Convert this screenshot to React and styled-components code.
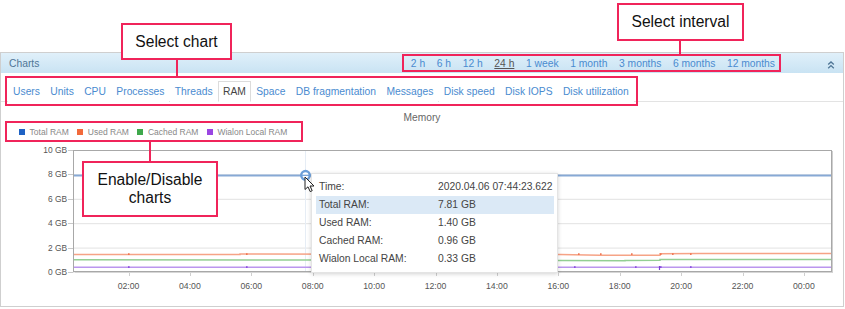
import React from 'react';
import styled, { createGlobalStyle } from 'styled-components';

const Global = createGlobalStyle`
  html, body { margin: 0; padding: 0; background: #fff; }
  body { font-family: "Liberation Sans", Arial, sans-serif; }
`;

const RED = '#f0245a';
const LINK = '#4a8bd0';

const Page = styled.div`
  position: relative;
  width: 845px;
  height: 309px;
  padding-top: 52px;
  box-sizing: border-box;
  overflow: hidden;
  font-family: "Liberation Sans", Arial, sans-serif;
  background: #fff;
`;

const Panel = styled.section`
  width: 844px;
  height: 255px;
  box-sizing: border-box;
  border: 1px solid #cfcfcf;
  display: flex;
  flex-direction: column;
`;

const Header = styled.header`
  height: 20px;
  display: flex;
  align-items: center;
  padding: 0 8px;
  background: linear-gradient(to bottom, #e0f0fa, #c9e3f3);
`;

const Title = styled.div`
  font-size: 10.3px;
  color: #4f7696;
`;

const Intervals = styled.nav`
  margin-left: auto;
  display: flex;
  gap: 11.6px;
  font-size: 10.3px;
`;

const Interval = styled.span`
  color: ${p => (p.$active ? '#555' : LINK)};
  text-decoration: ${p => (p.$active ? 'underline' : 'none')};
  white-space: nowrap;
`;

const Collapse = styled.div`
  margin-left: 52px;
  width: 8px;
  height: 8px;
  margin-top: 3px;
  display: flex;
`;

const Tabs = styled.div`
  height: 28px;
  display: flex;
  align-items: flex-end;
  gap: 0.3px;
  padding-left: 7px;
  border-bottom: 1px solid #e3e3e3;
`;

const Tab = styled.div`
  box-sizing: border-box;
  height: 21px;
  margin-bottom: -1px;
  padding: 0 4.05px;
  line-height: 19px;
  font-size: 10.3px;
  white-space: nowrap;
  color: ${p => (p.$active ? '#444' : LINK)};
  border: 1px solid ${p => (p.$active ? '#dcdcdc' : 'transparent')};
  border-bottom-color: ${p => (p.$active ? '#fff' : 'transparent')};
  background: #fff;
`;

const Body = styled.div`
  display: flex;
  flex-direction: column;
`;

const ChartTitle = styled.div`
  margin-top: 8px;
  height: 14px;
  line-height: 15px;
  text-align: center;
  font-size: 10.2px;
  color: #666;
`;

const Legend = styled.div`
  height: 15px;
  display: flex;
  align-items: center;
  gap: 8.4px;
  padding-left: 18px;
`;

const LegendItem = styled.div`
  display: flex;
  align-items: center;
  gap: 4.6px;
  font-size: 8.5px;
  color: #888;
`;

const Swatch = styled.span`
  width: 6px;
  height: 6px;
  background: ${p => p.$color};
`;

const ChartSvg = styled.svg`
  display: block;
  width: 842px;
  height: 158px;
  font-family: "Liberation Sans", Arial, sans-serif;
`;

const Tooltip = styled.div`
  position: absolute;
  left: 311px;
  top: 173px;
  width: 247px;
  box-sizing: border-box;
  padding: 4px 3px 4px 4px;
  background: #fff;
  border: 1px solid #e4e4e4;
  box-shadow: 0 1px 4px rgba(0, 0, 0, 0.18);
  font-size: 10.3px;
  color: #444;
`;

const TipRow = styled.div`
  display: grid;
  grid-template-columns: 119px 1fr;
  height: 18px;
  line-height: 18px;
  padding-left: 3px;
  background: ${p => (p.$hl ? '#dbe9f6' : 'transparent')};
`;

const Cursor = styled.svg`
  position: absolute;
  left: 304px;
  top: 176px;
  width: 11px;
  height: 17px;
`;

const Callout = styled.div`
  position: absolute;
  left: ${p => p.$x}px;
  top: ${p => p.$y}px;
  width: ${p => p.$w}px;
  height: ${p => p.$h}px;
  box-sizing: border-box;
  border: 2px solid ${RED};
  background: #fff;
  display: flex;
  align-items: center;
  justify-content: center;
  text-align: center;
  font-size: 15.6px;
  line-height: 18px;
  color: #111;
`;

const Frame = styled.div`
  position: absolute;
  left: ${p => p.$x}px;
  top: ${p => p.$y}px;
  width: ${p => p.$w}px;
  height: ${p => p.$h}px;
  box-sizing: border-box;
  border: 2px solid ${RED};
  pointer-events: none;
`;

const Connector = styled.div`
  position: absolute;
  left: ${p => p.$x}px;
  top: ${p => p.$y}px;
  width: 2px;
  height: ${p => p.$h}px;
  background: ${RED};
`;

const intervals = ['2 h', '6 h', '12 h', '24 h', '1 week', '1 month', '3 months', '6 months', '12 months'];
const tabs = ['Users', 'Units', 'CPU', 'Processes', 'Threads', 'RAM', 'Space', 'DB fragmentation', 'Messages', 'Disk speed', 'Disk IOPS', 'Disk utilization'];
const legend = [
  { label: 'Total RAM', color: '#1e62c4' },
  { label: 'Used RAM', color: '#f26a3b' },
  { label: 'Cached RAM', color: '#3fa84b' },
  { label: 'Wialon Local RAM', color: '#9a46e2' },
];
const tip = [
  ['Time:', '2020.04.06 07:44:23.622'],
  ['Total RAM:', '7.81 GB', true],
  ['Used RAM:', '1.40 GB'],
  ['Cached RAM:', '0.96 GB'],
  ['Wialon Local RAM:', '0.33 GB'],
];

const yv = v => 271 - v * 12.2;
const L = 73.5;
const R = 831.5;
const xTicks = Array.from({ length: 12 }, (_, i) => 128.5 + 61.4 * i);
const xLabels = ['02:00', '04:00', '06:00', '08:00', '10:00', '12:00', '14:00', '16:00', '18:00', '20:00', '22:00', '00:00'];

function Chart() {
  return (
    <ChartSvg viewBox="0 0 842 158">
      <g transform="translate(-1,-138)">
        {[2, 4, 6, 8].map(v => (
          <line key={v} x1={L} x2={R} y1={yv(v) + 0.5} y2={yv(v) + 0.5} stroke="#e2e2e2" strokeWidth="1" />
        ))}
        <line x1="305.5" x2="305.5" y1="150" y2="270" stroke="#e6edf5" strokeWidth="1" />
        {[0, 2, 4, 6, 8, 10].map(v => (
          <g key={v}>
            <line x1="68" x2={L} y1={Math.round(yv(v)) + 0.5} y2={Math.round(yv(v)) + 0.5} stroke="#c8c8c8" />
            <text x="67" y={yv(v) + 3} textAnchor="end" fontSize="8.4" fill="#555">{v} GB</text>
          </g>
        ))}
        {xTicks.map((x, i) => (
          <g key={i}>
            <line x1={Math.round(x) + 0.5} x2={Math.round(x) + 0.5} y1="271" y2="275" stroke="#cfcfcf" />
            <text x={x} y="288" textAnchor="middle" fontSize="8.7" fill="#555">{xLabels[i]}</text>
          </g>
        ))}
        <polyline points="73.5,253.4 240,253.4 240,253 560,253.5 600,254.2 660,254.2 660,252.7 700,252.5 831,252.4" fill="none" stroke="#f6a386" strokeWidth="1.5" />
        <polyline points="73.5,258.8 400,259 560,259.6 625,259.8 625,259.4 660,259.2 660,258.6 831,258.4" fill="none" stroke="#93cf93" strokeWidth="1.5" />
        <polyline points="73.5,266.2 831,266.2" fill="none" stroke="#bb96ee" strokeWidth="1.6" />
        {[128, 246, 578, 600, 631, 660, 672, 690].map(x => (
          <rect key={'o' + x} x={x} y="252.3" width="1.6" height="1.6" fill="#f0704a" />
        ))}
        {[128, 246, 574, 635, 660, 690].map(x => (
          <rect key={'p' + x} x={x} y="265.2" width="1.6" height="1.8" fill="#8c4ee0" />
        ))}
        <line x1="659.5" x2="659.5" y1="265" y2="269" stroke="#7a3fd0" strokeWidth="1.2" />
        <line x1={L} x2={R} y1="174.6" y2="174.6" stroke="#87a9d5" strokeWidth="2" />
        <rect x={L} y="149.5" width={R - L} height="121" fill="none" stroke="#a8a8a8" strokeWidth="1" />
        <line x1={R + 1} x2={R + 1} y1="150" y2="272" stroke="#cfcfcf" />
        <line x1={L + 1} x2={R + 1} y1="271.5" y2="271.5" stroke="#d6d6d6" />
        <circle cx="305.5" cy="174.3" r="4.3" fill="#fff" stroke="#6c9fd9" strokeWidth="2.4" />
        <line x1="302" x2="309" y1="174.3" y2="174.3" stroke="#6c9fd9" strokeWidth="1.2" />
      </g>
    </ChartSvg>
  );
}

export default function App() {
  return (
    <>
      <Global />
      <Page>
        <Panel>
          <Header>
            <Title>Charts</Title>
            <Intervals>
              {intervals.map(t => (
                <Interval key={t} $active={t === '24 h'}>{t}</Interval>
              ))}
            </Intervals>
            <Collapse>
              <svg width="8" height="8" viewBox="0 0 8 8">
                <path d="M1.2 3.6 L4 1 L6.8 3.6 M1.2 7.2 L4 4.6 L6.8 7.2" stroke="#4f7696" strokeWidth="1.3" fill="none" />
              </svg>
            </Collapse>
          </Header>
          <Tabs>
            {tabs.map(t => (
              <Tab key={t} $active={t === 'RAM'}>{t}</Tab>
            ))}
          </Tabs>
          <Body>
            <ChartTitle>Memory</ChartTitle>
            <Legend>
              {legend.map(l => (
                <LegendItem key={l.label}>
                  <Swatch $color={l.color} />
                  {l.label}
                </LegendItem>
              ))}
            </Legend>
            <Chart />
          </Body>
        </Panel>

        <Tooltip>
          {tip.map(([k, v, hl]) => (
            <TipRow key={k} $hl={hl}>
              <span>{k}</span>
              <span>{v}</span>
            </TipRow>
          ))}
        </Tooltip>
        <Cursor viewBox="0 0 11 17">
          <path d="M1 1 L1 13.5 L4 10.8 L6.2 15.6 L8.2 14.7 L6 10 L10 10 Z" fill="#fff" stroke="#222" strokeWidth="1" strokeLinejoin="round" />
        </Cursor>

        <Callout $x={121} $y={23} $w={111} $h={37}>Select chart</Callout>
        <Connector $x={176} $y={59} $h={18} />
        <Frame $x={5} $y={76} $w={633} $h={30} />

        <Callout $x={617} $y={3} $w={127} $h={38}>Select interval</Callout>
        <Connector $x={679} $y={40} $h={15} />
        <Frame $x={402} $y={54} $w={379} $h={18} />

        <Frame $x={5} $y={121} $w={298} $h={21} />
        <Connector $x={149} $y={141} $h={21} />
        <Callout $x={82} $y={161} $w={136} $h={56}>Enable/Disable<br />charts</Callout>
      </Page>
    </>
  );
}
